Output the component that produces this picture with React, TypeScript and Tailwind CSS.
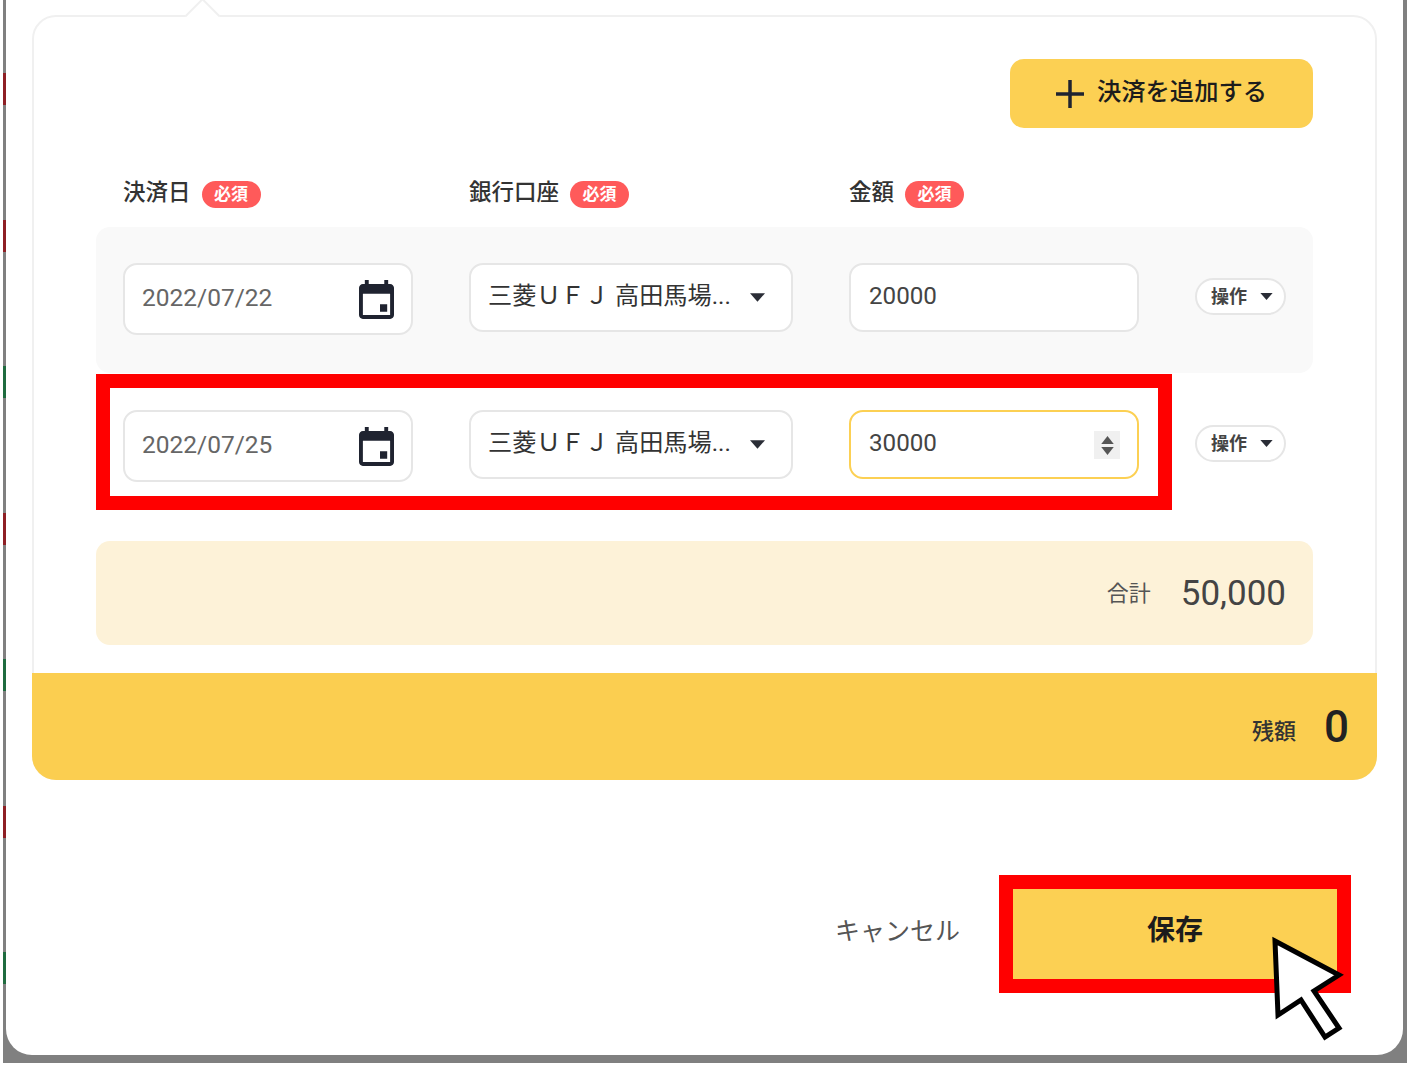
import React from 'react';

const FONT = "font-['Roboto','Noto_Sans_CJK_JP',sans-serif]";

const stripes = ['bg-[#8e1f24]', 'bg-[#8e1f24]', 'bg-[#1f6b3f]', 'bg-[#8e1f24]', 'bg-[#1f6b3f]', 'bg-[#8e1f24]', 'bg-[#1f6b3f]'];

function Required() {
  return (
    <span className="ml-[11px] flex h-[27px] w-[59px] items-center justify-center rounded-full bg-[#ff5a5a] text-[17px] font-bold text-white">
      必須
    </span>
  );
}

function Caret({ className }: { className: string }) {
  return (
    <svg viewBox="0 0 14 8" className={className}>
      <path d="M0 0h14L7 8z" fill="#2a2d36" />
    </svg>
  );
}

function CalendarIcon() {
  return (
    <svg viewBox="3 1 18 20" className="h-[39px] w-[35px]">
      <path
        d="M17.5 13.4h-3.7v3.9h3.7zM16 1v2H8V1H6v2H5c-1.11 0-1.99.9-1.99 2L3 19c0 1.1.89 2 2 2h14c1.1 0 2-.9 2-2V5c0-1.1-.9-2-2-2h-1V1h-2zm3 18H5V8h14v11z"
        fill="#1f2330"
      />
    </svg>
  );
}

function DateField({ value }: { value: string }) {
  return (
    <div className="flex h-[72px] w-[290px] shrink-0 items-center justify-between rounded-[14px] border-2 border-[#e6e6e6] bg-white pl-[17px] pr-[17px]">
      <span className="mb-[2px] text-[24.5px] text-[#666]">{value}</span>
      <CalendarIcon />
    </div>
  );
}

function BankSelect() {
  return (
    <div className="ml-[56px] flex h-[69px] w-[324px] shrink-0 items-center rounded-[14px] border-2 border-[#e6e6e6] bg-white pl-[17px]">
      <span className="mb-[2px] w-[262px] whitespace-nowrap text-[24.2px] text-[#333]">三菱ＵＦＪ 高田馬場...</span>
      <Caret className="h-[9px] w-[15px]" />
    </div>
  );
}

function OpsPill() {
  return (
    <div className="flex h-[37px] w-[91px] shrink-0 items-center gap-[13px] rounded-full border-2 border-[#e6e6e6] bg-white pl-[14px]">
      <span className="text-[18px] font-bold leading-none text-[#444]">操作</span>
      <Caret className="h-[7px] w-[13px]" />
    </div>
  );
}

function Stepper() {
  return (
    <div className="flex h-[28px] w-[26px] flex-col items-center justify-center gap-[3px] bg-[#f0f0f0]">
      <svg viewBox="0 0 14 9" className="h-[8px] w-[13px]"><path d="M7 0l7 9H0z" fill="#555" /></svg>
      <svg viewBox="0 0 14 9" className="h-[8px] w-[13px]"><path d="M0 0h14L7 9z" fill="#555" /></svg>
    </div>
  );
}

export default function App() {
  return (
    <div className={`h-[1067px] w-full overflow-hidden bg-white ${FONT}`}>
      <div className="ml-[3px] flex h-[1063px] w-[1404px] bg-[#808080] pb-[8px] pr-[4px]">
        {/* stripes of the page behind the modal */}
        <div className="flex w-[3px] shrink-0 flex-col gap-[114.5px] pt-[73px]">
          {stripes.map((c, i) => (
            <div key={i} className={`h-[32px] w-full ${c}`} />
          ))}
        </div>

        <div className="relative flex-1 rounded-b-[26px] bg-white">
          {/* card */}
          <div className="relative ml-[26px] mt-[15px] flex w-[1345px] flex-col rounded-[24px] border-2 border-[#f0f0f0] bg-white pt-[42px]">
            <div className="absolute left-[156px] top-[-14px] h-[25px] w-[25px] rotate-45 border-l-2 border-t-2 border-[#f0f0f0] bg-white" />

            <div className="pl-[62px] pr-[62px]">
              <div className="flex justify-end">
                <button className="flex h-[69px] w-[303px] items-center justify-center gap-[13px] rounded-[14px] bg-[#fcd053] text-[24.3px] font-medium text-[#1c1c1c]">
                  <svg viewBox="0 0 28 28" className="h-[28px] w-[28px]">
                    <path d="M14 0v28M0 14h28" stroke="#1f2330" strokeWidth="3.5" />
                  </svg>
                  <span className="mb-[2px]">決済を追加する</span>
                </button>
              </div>

              {/* column labels */}
              <div className="mt-[53px] flex h-[27px] items-center pl-[27px] text-[22.5px] font-medium text-[#333]">
                <div className="flex w-[346px] items-center"><span className="mb-[4px]">決済日</span><Required /></div>
                <div className="flex w-[380px] items-center"><span className="mb-[4px]">銀行口座</span><Required /></div>
                <div className="flex items-center"><span className="mb-[4px]">金額</span><Required /></div>
              </div>

              {/* first payment */}
              <div className="mt-[19px] flex h-[146px] items-start rounded-[14px] bg-[#f9f9f9] pl-[27px] pt-[36px]">
                <DateField value="2022/07/22" />
                <BankSelect />
                <div className="ml-[56px] flex h-[69px] w-[290px] shrink-0 items-center rounded-[14px] border-2 border-[#e6e6e6] bg-white pl-[18px] text-[24.2px] text-[#444]">
                  <span className="mb-[2px]">20000</span>
                </div>
                <div className="ml-[56px] mt-[15px]"><OpsPill /></div>
              </div>

              {/* second payment, framed in red */}
              <div className="mt-[1px] flex h-[136px] items-start">
                <div className="box-border flex h-[136px] w-[1076px] shrink-0 items-start border-[14px] border-[#ff0000] bg-white pl-[13px] pt-[22px]">
                  <DateField value="2022/07/25" />
                  <BankSelect />
                  <div className="ml-[56px] flex h-[69px] w-[290px] shrink-0 items-center justify-between rounded-[14px] border-2 border-[#fcd053] bg-white pl-[18px] pr-[17px] text-[24.2px] text-[#444]">
                    <span className="mb-[2px]">30000</span>
                    <span className="mt-[1px]"><Stepper /></span>
                  </div>
                </div>
                <div className="ml-[23px] mt-[51px]"><OpsPill /></div>
              </div>

              {/* total */}
              <div className="mt-[31px] flex h-[104px] items-center justify-end gap-[30px] rounded-[14px] bg-[#fdf2d8] pr-[27px]">
                <span className="text-[22px] text-[#555]">合計</span>
                <span className="mt-[2px] text-[35px] text-[#444]">50,000</span>
              </div>
            </div>

            {/* balance */}
            <div className="-mx-[2px] -mb-[2px] mt-[28px] flex h-[107px] items-center justify-end gap-[28px] rounded-b-[24px] bg-[#fbce50] pr-[28px]">
              <span className="mt-[10px] text-[22px] font-medium text-[#333]">残額</span>
              <span className="text-[44px] font-medium leading-none text-[#222]">0</span>
            </div>
          </div>

          {/* footer buttons */}
          <div className="mr-[52px] mt-[95px] flex items-center justify-end gap-[39px]">
            <span className="mb-[4px] text-[25px] text-[#555]">キャンセル</span>
            <button className="box-border h-[118px] w-[352px] border-[14px] border-[#ff0000] bg-[#fcd053] pb-[6px] text-[28px] font-bold text-[#1c1c1c]">
              保存
            </button>
          </div>

          {/* mouse pointer annotation */}
          <svg viewBox="0 0 80 110" className="absolute left-[1262px] top-[934px] h-[110px] w-[80px]">
            <path
              d="M7 7L71 41L46 57L71 94L57 103L33 66L10 81z"
              fill="#fff"
              stroke="#000"
              strokeWidth="5"
            />
          </svg>
        </div>
      </div>
    </div>
  );
}
